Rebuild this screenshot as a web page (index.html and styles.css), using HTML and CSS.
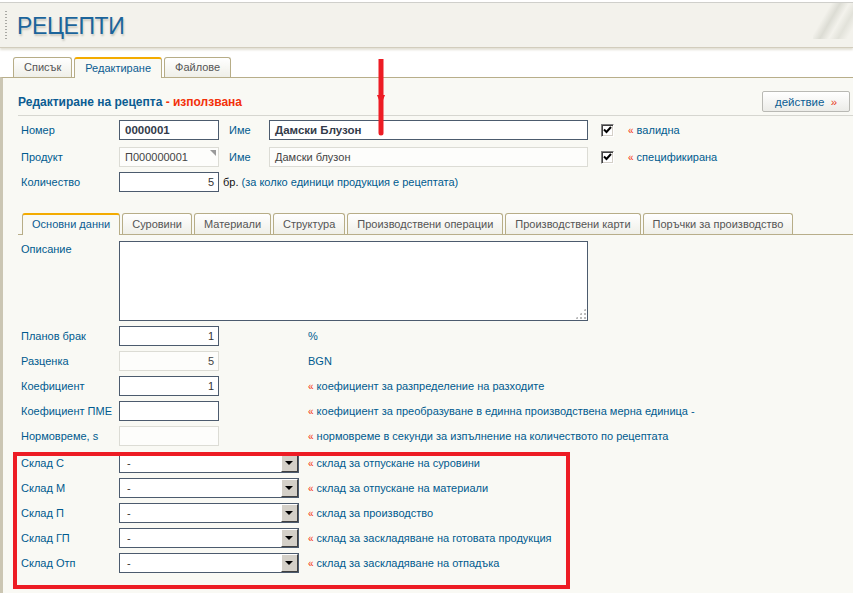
FILE: index.html
```html
<!DOCTYPE html>
<html lang="bg">
<head>
<meta charset="utf-8">
<title>Рецепти</title>
<link rel="stylesheet" href="styles.css">
</head>
<body>
<div class="page">
  <header class="header">
    <span class="grip"></span>
    <h1 class="title">РЕЦЕПТИ</h1>
    <span class="deco"></span>
  </header>
  <nav class="tabs">
    <span class="tab">Списък</span>
    <span class="tab active">Редактиране</span>
    <span class="tab">Файлове</span>
  </nav>
  <main class="panel">
    <div class="head-row">
      <h2 class="heading">Редактиране на рецепта <span class="state">- използвана</span></h2>
      <button class="action">действие <span class="raquo">»</span></button>
    </div>
    <div class="sep"></div>

    <div class="top-row r1">
      <span class="lbl">Номер</span>
      <span class="inp w100 bold">0000001</span>
      <span class="lbl2">Име</span>
      <span class="inp w319 bold">Дамски Блузон</span>
      <span class="chk"><svg width="9" height="8" viewBox="0 0 9 8"><path d="M1 3.5 L3.5 6 L8 1" fill="none" stroke="#000" stroke-width="2"/></svg></span>
      <span class="hint"><span class="q">«</span> валидна</span>
    </div>
    <div class="top-row r2">
      <span class="lbl">Продукт</span>
      <span class="inp w100 dis corner">П000000001</span>
      <span class="lbl2">Име</span>
      <span class="inp w319 dis">Дамски блузон</span>
      <span class="chk"><svg width="9" height="8" viewBox="0 0 9 8"><path d="M1 3.5 L3.5 6 L8 1" fill="none" stroke="#000" stroke-width="2"/></svg></span>
      <span class="hint"><span class="q">«</span> спецификирана</span>
    </div>
    <div class="top-row r3">
      <span class="lbl">Количество</span>
      <span class="inp w100 right">5</span>
      <span class="qty"><span class="blk">бр.</span> (за колко единици продукция е рецептата)</span>
    </div>

    <nav class="subtabs">
      <span class="stab active">Основни данни</span>
      <span class="stab">Суровини</span>
      <span class="stab">Материали</span>
      <span class="stab">Структура</span>
      <span class="stab">Производствени операции</span>
      <span class="stab">Производствени карти</span>
      <span class="stab">Поръчки за производство</span>
    </nav>

    <div class="grid">
      <span class="lbl top">Описание</span>
      <span class="textarea"><span class="resize"></span></span>

      <span class="lbl">Планов брак</span>
      <span class="inp w100 right">1</span>
      <span class="unit">%</span>

      <span class="lbl">Разценка</span>
      <span class="inp w100 right dis">5</span>
      <span class="unit">BGN</span>

      <span class="lbl">Коефициент</span>
      <span class="inp w100 right">1</span>
      <span class="hint"><span class="q">«</span> коефициент за разпределение на разходите</span>

      <span class="lbl">Коефициент ПМЕ</span>
      <span class="inp w100"></span>
      <span class="hint"><span class="q">«</span> коефициент за преобразуване в единна производствена мерна единица -</span>

      <span class="lbl">Нормовреме, s</span>
      <span class="inp w100 dis"></span>
      <span class="hint"><span class="q">«</span> нормовреме в секунди за изпълнение на количеството по рецептата</span>
    </div>

    <div class="grid stores">
      <span class="lbl">Склад С</span>
      <span class="sel">-<span class="drop"></span></span>
      <span class="hint"><span class="q">«</span> склад за отпускане на суровини</span>

      <span class="lbl">Склад М</span>
      <span class="sel">-<span class="drop"></span></span>
      <span class="hint"><span class="q">«</span> склад за отпускане на материали</span>

      <span class="lbl">Склад П</span>
      <span class="sel">-<span class="drop"></span></span>
      <span class="hint"><span class="q">«</span> склад за производство</span>

      <span class="lbl">Склад ГП</span>
      <span class="sel">-<span class="drop"></span></span>
      <span class="hint"><span class="q">«</span> склад за заскладяване на готовата продукция</span>

      <span class="lbl">Склад Отп</span>
      <span class="sel">-<span class="drop"></span></span>
      <span class="hint"><span class="q">«</span> склад за заскладяване на отпадъка</span>
    </div>
  </main>

  <div class="redbox"></div>
  <svg class="arrow" width="12" height="80" viewBox="0 0 12 80">
    <path d="M6 0 V74" stroke="#ed1c24" stroke-width="5" stroke-linecap="round" fill="none"/>
    <path d="M2 36 L6 46 L10 36 Z" fill="#ed1c24"/>
  </svg>
</div>
</body>
</html>
```

FILE: styles.css
```css
* { box-sizing: border-box; }
html, body { margin: 0; padding: 0; }
body {
  background: #fff;
  font-family: "Liberation Sans", Arial, sans-serif;
  font-size: 11px;
  color: #005b8f;
  width: 853px;
  height: 593px;
  overflow: hidden;
}
.page { position: relative; width: 853px; height: 593px; }

.header {
  margin-top: 2px;
  height: 46px;
  background: #f3f2ec;
  border-top: 1px solid #cfcfcb;
  border-bottom: 1px solid #d2cdbd;
  box-shadow: 0 2px 2px #e4e1d6;
  display: flex;
  align-items: center;
  position: relative;
}
.grip {
  width: 2px;
  height: 30px;
  margin-left: 5px;
  margin-top: 2px;
  background: repeating-linear-gradient(to bottom, #a9a9a4 0 1px, transparent 1px 3px);
}
.title {
  margin: 0 0 0 10px;
  font-size: 23px;
  font-weight: normal;
  color: #1b649b;
  text-shadow: 1px 2px 2px #c9c8c0;
  letter-spacing: -0.4px;
  padding-top: 2px;
}
.deco {
  position: absolute;
  right: 0;
  top: 0;
  width: 40px;
  height: 36px;
  background: linear-gradient(120deg, transparent 30%, #dcdcd4 45%, transparent 60%, #e2e2da 75%, transparent 90%);
}

.tabs {
  display: flex;
  gap: 2px;
  padding: 9px 0 0 13px;
  height: 29px;
  background: #fff;
}
.tab {
  height: 20px;
  padding: 0 10px;
  border: 1px solid #b7ad87;
  border-bottom: none;
  border-radius: 3px 3px 0 0;
  background: linear-gradient(#ffffff, #efefe8);
  color: #555;
  line-height: 19px;
  font-size: 11px;
}
.tab.active {
  border-top: 2px solid #f3ab00;
  background: #f9f9f4;
  color: #0b5c92;
  line-height: 18px;
  height: 21px;
  margin-bottom: -1px;
  position: relative;
  z-index: 1;
}

.panel {
  background: #f9f9f4;
  border-top: 1px solid #b8ae8a;
  border-left: 3px solid #cbc6b3;
  height: 516px;
  padding-left: 15px;
}
.head-row {
  display: flex;
  align-items: center;
  justify-content: space-between;
  padding-top: 13px;
  padding-right: 3px;
  height: 34px;
}
.heading {
  margin: 0;
  font-size: 12px;
  font-weight: bold;
  color: #0b5c92;
}
.state { color: #f3300a; }
.action {
  width: 88px;
  height: 21px;
  border: 1px solid #b9b9b4;
  border-radius: 2px;
  background: linear-gradient(#ffffff, #ecece8);
  font-family: inherit;
  font-size: 11.5px;
  color: #0b5c92;
  padding: 0;
}
.raquo { color: #e8401c; margin-left: 3px; }
.sep {
  height: 1px;
  background: #d6d6d0;
  margin-top: 3px;
}

.top-row {
  display: flex;
  align-items: center;
  height: 20px;
}
.r1 { margin-top: 4px; }
.r2 { margin-top: 7px; }
.r3 { margin-top: 5px; }
.lbl { padding-left: 3px; width: 101px; flex: none; }
.lbl2 { width: 50px; padding-left: 10px; flex: none; }
.inp {
  height: 20px;
  border: 1px solid #4c5b6e;
  background: #fff;
  color: #333;
  line-height: 18px;
  padding: 0 4px 0 5px;
  flex: none;
  display: block;
  position: relative;
}
.w100 { width: 100px; }
.w319 { width: 319px; }
.bold { font-weight: bold; font-size: 11.5px; color: #333b4a; }
.right { text-align: right; }
.dis { border-color: #dcdcd5; background: #fdfdfb; color: #444; }
.corner::after {
  content: "";
  position: absolute;
  top: 2px;
  right: 2px;
  border-style: solid;
  border-width: 0 6px 6px 0;
  border-color: transparent #9a9a9a transparent transparent;
}
.chk {
  width: 13px;
  height: 13px;
  margin-left: 13px;
  border: 1px solid;
  border-color: #808080 #fff #fff #808080;
  box-shadow: inset 1px 1px 0 #404040, inset -1px -1px 0 #d4d0c8;
  background: #fff;
  display: flex;
  align-items: center;
  justify-content: center;
  flex: none;
}
.top-row .hint { margin-left: 14px; }
.q { color: #f3300a; font-size: 10px; }
.qty { margin-left: 4px; }
.blk { color: #111; }

.subtabs {
  display: flex;
  gap: 2px;
  margin-top: 21px;
  padding-left: 4px;
  height: 22px;
  border-bottom: 1px solid #b8ae8a;
}
.stab {
  height: 21px;
  padding: 0 9px;
  border: 1px solid #b7ad87;
  border-bottom: none;
  border-radius: 3px 3px 0 0;
  background: linear-gradient(#ffffff, #efefe8);
  color: #555;
  line-height: 20px;
  font-size: 11px;
}
.stab.active {
  border-top: 2px solid #f3ab00;
  background: #f9f9f4;
  color: #0b5c92;
  line-height: 19px;
  height: 22px;
  margin-bottom: -1px;
  position: relative;
}

.grid {
  display: grid;
  grid-template-columns: 101px 189px auto;
  row-gap: 5px;
  align-items: center;
  margin-top: 6px;
}
.grid .lbl.top { align-self: start; padding-top: 2px; }
.textarea {
  grid-column: 2 / span 2;
  width: 469px;
  height: 80px;
  border: 1px solid #4c5b6e;
  background: #fff;
  position: relative;
  display: block;
}
.resize {
  position: absolute;
  right: 1px;
  bottom: 1px;
  width: 11px;
  height: 11px;
  background:
    radial-gradient(circle, #bbb 1px, transparent 1.2px) 0 0 / 4px 4px;
  clip-path: polygon(100% 0, 100% 100%, 0 100%);
}
.unit { color: #005b8f; }
.stores { margin-top: 7px; }
.sel {
  width: 180px;
  height: 20px;
  border: 1px solid #4c5b6e;
  background: #fff;
  color: #333;
  line-height: 18px;
  padding-left: 7px;
  position: relative;
  display: block;
}
.drop {
  position: absolute;
  right: 0;
  top: 0;
  width: 17px;
  height: 18px;
  background: #d4d0c8;
  border: 1px solid;
  border-color: #fff #404040 #404040 #fff;
}
.drop::after {
  content: "";
  position: absolute;
  left: 3px;
  top: 6px;
  border-style: solid;
  border-width: 4px 4px 0 4px;
  border-color: #000 transparent transparent transparent;
}

.redbox {
  position: absolute;
  left: 13px;
  top: 450px;
  width: 557px;
  height: 137px;
  border: 4px solid #ed1c24;
}
.arrow {
  position: absolute;
  left: 375px;
  top: 57px;
}
```
